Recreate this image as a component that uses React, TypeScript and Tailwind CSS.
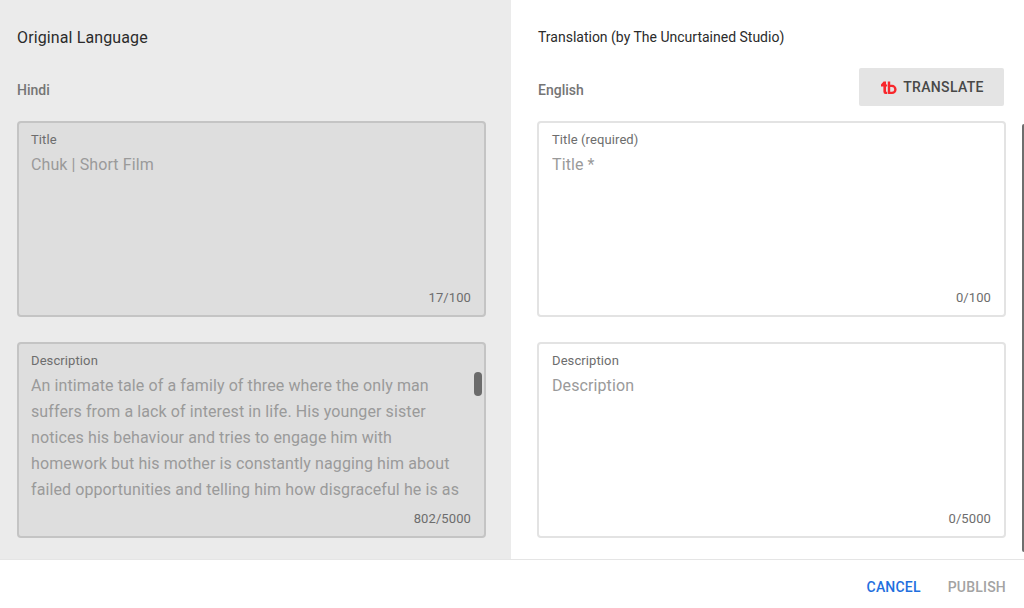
const font = "font-['Roboto',sans-serif]";

function TbLogo() {
  return (
    <svg width="16" height="13" viewBox="0 0 16 13" fill="#f8272c" aria-hidden>
      <path d="M0 3.4 2.6 0.6H5V3.4H6.2V5.6H5V10.8H6.2V13H4.6A2.2 2.2 0 0 1 2.4 10.8V5.6H0z" />
      <path d="M6.8 0.6H9.2V3.8H11a4.6 4.6 0 1 1 0 9.2H7.4L6.8 12.4zM9.2 6.1V10.7H10.9a2.3 2.3 0 1 0 0-4.6z" fillRule="evenodd" />
    </svg>
  );
}

type FieldProps = {
  label: string;
  value?: string;
  placeholder?: string;
  count: string;
  disabled?: boolean;
  scrollbar?: boolean;
};

function Field({ label, value, placeholder, count, disabled, scrollbar }: FieldProps) {
  return (
    <div
      className={
        "relative flex h-[196px] flex-col rounded-[4px] border-2 pt-[8px] pr-[24px] " +
        (disabled ? "border-[#c4c4c4] bg-[#dedede] pl-[12px]" : "border-[#e3e3e3] bg-white pl-[13px]")
      }
    >
      <div className="text-[13px] leading-[17px] tracking-[0.1px] text-[#6d6d6d]">{label}</div>
      <div className="mt-[4px] h-[131px] overflow-hidden whitespace-pre-line text-[16px] leading-[26px] tracking-[0.1px] text-[#9a9a9a]">
        {value ?? placeholder}
      </div>
      <div className="absolute bottom-[9px] right-[13px] text-[13px] leading-[17px] tracking-[0.1px] text-[#6d6d6d]">{count}</div>
      {scrollbar && <div className="absolute right-[2px] top-[28px] h-[24px] w-[8px] rounded-[4px] bg-[#6b6b6b]" />}
    </div>
  );
}

export default function App() {
  return (
    <div className={"relative flex h-[608px] w-[1024px] flex-col overflow-hidden bg-white " + font}>
      <div className="flex h-[559px] min-h-0">
        <section className="flex w-[511px] flex-col bg-[#ebebeb] pl-[17px] pr-[25px]">
          <h2 className="mt-[27px] text-[16px] leading-[21px] tracking-[0.12px] text-[#2b2b2b]">Original Language</h2>
          <div className="mt-[32px] text-[14px] leading-[21px] font-medium text-[#757575]">Hindi</div>
          <div className="mt-[20px] flex flex-col gap-[25px]">
            <Field label="Title" value="Chuk | Short Film" count="17/100" disabled />
            <Field
              label="Description"
              value={
                "An intimate tale of a family of three where the only man\nsuffers from a lack of interest in life. His younger sister\nnotices his behaviour and tries to engage him with\nhomework but his mother is constantly nagging him about\nfailed opportunities and telling him how disgraceful he is as"
              }
              count="802/5000"
              disabled
              scrollbar
            />
          </div>
        </section>
        <section className="flex flex-1 flex-col pl-[26px] pr-[18px]">
          <h2 className="mt-[27px] pl-[1px] text-[14px] leading-[21px] text-[#2b2b2b]">Translation (by The Uncurtained Studio)</h2>
          <div className="flex h-[73px] items-start justify-between">
            <div className="mt-[32px] pl-[1px] text-[14px] leading-[21px] font-medium text-[#757575]">English</div>
            <button className="mt-[20px] mr-[2px] flex h-[38px] w-[145px] items-center justify-center gap-[6px] rounded-[2px] bg-[#e4e4e4] pl-[2px] text-[14px] font-medium tracking-[0.35px] text-[#484848]">
              <TbLogo />
              TRANSLATE
            </button>
          </div>
          <div className="flex flex-col gap-[25px]">
            <Field label="Title (required)" placeholder="Title *" count="0/100" />
            <Field label="Description" placeholder="Description" count="0/5000" />
          </div>
        </section>
      </div>
      <footer className="flex flex-1 items-center justify-end gap-[27px] border-t border-[#e5e5e5] pr-[18px] pt-[6px] text-[14px] font-medium tracking-[0.2px]">
        <button className="text-[#1f6fde]">CANCEL</button>
        <button className="text-[#a3a3a3]">PUBLISH</button>
      </footer>
      <div className="absolute right-0 top-[124px] h-[428px] w-[2px] rounded-l-[2px] bg-[#6e6e6e]" />
    </div>
  );
}
